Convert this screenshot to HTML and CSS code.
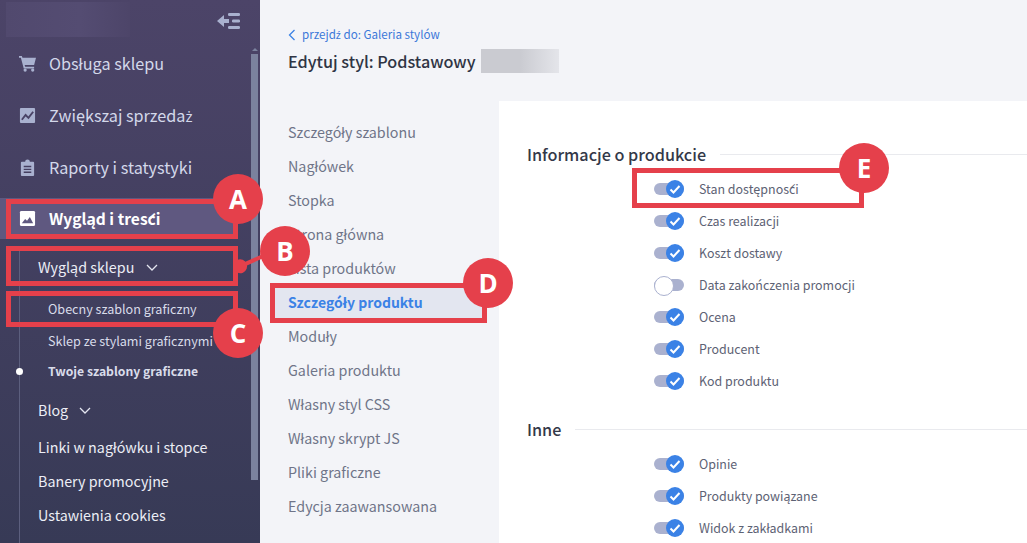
FILE: index.html
```
<!DOCTYPE html>
<html lang="pl">
<head>
<meta charset="utf-8">
<title>Edytuj styl</title>
<link rel="stylesheet" href="styles.css">
</head>
<body>
<div class="app">
  <aside class="sidebar">
    <div class="side-head">
      <div class="logo-blur"></div>
      <svg class="collapse" width="23" height="16" viewBox="0 0 23 16"><path d="M0 8l7-6v4h5v4H7v4z" fill="#a9b1cf"/><rect x="11" y="0" width="12" height="3" rx="1.200" fill="#a9b1cf"/><rect x="15" y="6.500" width="8" height="3" rx="1.200" fill="#a9b1cf"/><rect x="11" y="13" width="12" height="3" rx="1.200" fill="#a9b1cf"/></svg>
    </div>
    <div class="side-scroll">
      <nav class="menu">
        <a class="top-item"><svg class="ico" viewBox="0 0 18 18"><path d="M0 1h3l.7 2H18l-2 7.500H6l.5 2H16v1.800H5L2 2.800H0z" fill="#a9b1cf"/><circle cx="6.500" cy="16" r="1.700" fill="#a9b1cf"/><circle cx="14.500" cy="16" r="1.700" fill="#a9b1cf"/></svg>Obsługa sklepu</a>
        <a class="top-item"><svg class="ico" viewBox="0 0 18 18"><rect x="1" y="1" width="16" height="16" rx="1" fill="#a9b1cf"/><path d="M3 13.500l4-5 3 3 5-6.500" fill="none" stroke="#4a4366" stroke-width="2"/></svg><span>Zwiększaj sprzeda<span class="dia">ż</span></span></a>
        <a class="top-item"><svg class="ico" viewBox="0 0 18 18"><path d="M3 3h3.500a2.500 2.500 0 0 1 5 0H15a1 1 0 0 1 1 1v13a1 1 0 0 1-1 1H3a1 1 0 0 1-1-1V4a1 1 0 0 1 1-1z" fill="#a9b1cf"/><path d="M5 8h8M5 11h8M5 14h8" stroke="#453f60" stroke-width="1.500"/></svg>Raporty i statystyki</a>
        <a class="top-item active"><svg class="ico" viewBox="0 0 18 18"><rect x="1" y="1" width="16" height="16" rx="1.500" fill="#fff"/><path d="M3 14l3.500-4.500 2 2L11.500 7.500 15 14z" fill="#5f5880"/></svg>Wygląd i treści</a>
      </nav>
      <div class="submenu">
        <a class="sub-item first">Wygląd sklepu <svg class="chev" width="12" height="7" viewBox="0 0 12 7"><path d="M1 1l5 5 5-5" fill="none" stroke="#e4e6f0" stroke-width="1.300"/></svg></a>
        <div class="sub-sub">
          <a>Obecny szablon graficzny</a>
          <a>Sklep ze stylami graficznymi</a>
          <a class="current">Twoje szablony graficzne</a>
        </div>
        <a class="sub-item blog">Blog <svg class="chev" width="12" height="7" viewBox="0 0 12 7"><path d="M1 1l5 5 5-5" fill="none" stroke="#e4e6f0" stroke-width="1.300"/></svg></a>
        <a class="sub-item">Linki w nagłówku i stopce</a>
        <a class="sub-item">Banery promocyjne</a>
        <a class="sub-item">Ustawienia cookies</a>
      </div>
      <div class="scrollbar"><div class="arrow"></div><div class="thumb"></div></div>
    </div>
  </aside>
  <main class="main">
    <header class="page-head">
      <a class="back"><svg width="8" height="12" viewBox="0 0 8 12"><path d="M6.500 1l-5 5 5 5" fill="none" stroke="#3b82e6" stroke-width="1.300"/></svg><span>przejd<span class="dia">ź</span> do: Galeria stylów</span></a>
      <h1>Edytuj styl: Podstawowy <span class="name-blur"></span></h1>
    </header>
    <div class="columns">
      <nav class="style-nav">
        <a>Szczegóły szablonu</a>
        <a>Nagłówek</a>
        <a>Stopka</a>
        <a>Strona główna</a>
        <a>Lista produktów</a>
        <a class="selected">Szczegóły produktu</a>
        <a>Moduły</a>
        <a>Galeria produktu</a>
        <a>Własny styl CSS</a>
        <a>Własny skrypt JS</a>
        <a>Pliki graficzne</a>
        <a>Edycja zaawansowana</a>
      </nav>
      <section class="panel">
        <h2><span>Informacje o produkcie</span></h2>
        <div class="rows">
          <label class="row"><span class="toggle on"><svg viewBox="0 0 16 16" width="16" height="16"><path d="M3.500 8.500l3 3 6-6.500" fill="none" stroke="#fff" stroke-width="2"/></svg></span>Stan dostępności</label>
          <label class="row"><span class="toggle on"><svg viewBox="0 0 16 16" width="16" height="16"><path d="M3.500 8.500l3 3 6-6.500" fill="none" stroke="#fff" stroke-width="2"/></svg></span>Czas realizacji</label>
          <label class="row"><span class="toggle on"><svg viewBox="0 0 16 16" width="16" height="16"><path d="M3.500 8.500l3 3 6-6.500" fill="none" stroke="#fff" stroke-width="2"/></svg></span>Koszt dostawy</label>
          <label class="row"><span class="toggle off"></span>Data zakończenia promocji</label>
          <label class="row"><span class="toggle on"><svg viewBox="0 0 16 16" width="16" height="16"><path d="M3.500 8.500l3 3 6-6.500" fill="none" stroke="#fff" stroke-width="2"/></svg></span>Ocena</label>
          <label class="row"><span class="toggle on"><svg viewBox="0 0 16 16" width="16" height="16"><path d="M3.500 8.500l3 3 6-6.500" fill="none" stroke="#fff" stroke-width="2"/></svg></span>Producent</label>
          <label class="row"><span class="toggle on"><svg viewBox="0 0 16 16" width="16" height="16"><path d="M3.500 8.500l3 3 6-6.500" fill="none" stroke="#fff" stroke-width="2"/></svg></span>Kod produktu</label>
        </div>
        <h2 class="second"><span>Inne</span></h2>
        <div class="rows">
          <label class="row"><span class="toggle on"><svg viewBox="0 0 16 16" width="16" height="16"><path d="M3.500 8.500l3 3 6-6.500" fill="none" stroke="#fff" stroke-width="2"/></svg></span>Opinie</label>
          <label class="row"><span class="toggle on"><svg viewBox="0 0 16 16" width="16" height="16"><path d="M3.500 8.500l3 3 6-6.500" fill="none" stroke="#fff" stroke-width="2"/></svg></span>Produkty powiązane</label>
          <label class="row"><span class="toggle on"><svg viewBox="0 0 16 16" width="16" height="16"><path d="M3.500 8.500l3 3 6-6.500" fill="none" stroke="#fff" stroke-width="2"/></svg></span>Widok z zakładkami</label>
        </div>
      </section>
    </div>
  </main>
</div>
<div class="box box-a"></div>
<div class="box box-b"></div>
<div class="box box-c"></div>
<div class="box box-d"></div>
<div class="box box-e"></div>
<div class="connector"></div>
<div class="badge badge-a">A</div>
<div class="badge badge-b">B</div>
<div class="badge badge-c">C</div>
<div class="badge badge-d">D</div>
<div class="badge badge-e">E</div>
</body>
</html>
```
FILE: styles.css
```
* { box-sizing: border-box; }
html, body { margin: 0; padding: 0; height: 543px; overflow: hidden; }
body { font-family: "Noto Sans CJK JP", "Noto Sans", sans-serif; background: #f3f4f8; color: #2f3444; position: relative; }
a { display: block; text-decoration: none; }
.dia { font-family: "Noto Sans", sans-serif; font-size: 0.93em; }
.app { display: flex; height: 543px; }

.sidebar { width: 260px; flex: none; height: 543px; background: linear-gradient(180deg, #4c4468 0%, #373a56 100%); display: flex; flex-direction: column; }
.side-head { height: 37px; flex: none; position: relative; display: flex; align-items: flex-start; justify-content: flex-end; padding: 13px 20px 0 6px; }
.logo-blur { position: absolute; left: 6px; top: 2px; width: 124px; height: 35px; background: linear-gradient(90deg, #51496e, #544c72 60%, #4d4569); }
.side-scroll { flex: 1; position: relative; min-height: 0; }
.scrollbar { position: absolute; right: 0; top: 0; bottom: 0; width: 10px; }
.arrow { position: absolute; left: 2px; top: 11px; border: 3px solid transparent; border-top: 0; border-bottom: 3px solid #7b829e; }
.thumb { position: absolute; left: 1px; right: 2px; top: 17px; height: 426px; background: #7b829e; }
.menu { display: flex; flex-direction: column; }
.top-item { height: 52px; display: flex; align-items: center; padding-left: 19px; color: #d3d8ea; font-size: 16.200px; gap: 13px; }
.ico { width: 17px; height: 17px; flex: none; }
.top-item.active { height: 41px; margin-top: 5px; color: #fff; font-weight: 700; font-size: 15.600px; background: #5f5880; margin-right: 22px; }
.submenu { margin-left: 19px; margin-top: 9px; border-left: 1px solid #5c5f7e; padding-left: 18px; height: 300px; }
.sub-item { color: #eceef6; font-size: 14.300px; height: 34px; line-height: 34px; }
.sub-item.first { height: 38px; line-height: 38px; }
.chev { margin-left: 8px; vertical-align: 2px; }
.sub-sub { padding: 7px 0 2.500px 10px; }
.sub-sub a { color: #d9dcea; font-size: 12.600px; height: 31.500px; line-height: 31.500px; }
.sub-sub a.current { font-weight: 700; font-size: 12.200px; position: relative; }
.sub-sub a.current::before { content: ""; position: absolute; left: -32.500px; top: 12px; width: 7px; height: 7px; border-radius: 50%; background: #fff; }
.sub-item.blog { height: 40px; line-height: 40px; }

.main { flex: 1; min-width: 0; display: flex; flex-direction: column; }
.page-head { height: 101px; padding: 25px 0 0 28px; flex: none; }
.back { color: #3b78d8; font-size: 11.600px; line-height: 18px; display: flex; align-items: center; gap: 6px; }
h1 { margin: 4px 0 0; font-size: 16.200px; font-weight: 500; line-height: 26px; color: #2f3444; display: flex; align-items: center; gap: 5px; }
.name-blur { display: inline-block; width: 78px; height: 24px; background: linear-gradient(90deg, #cacbd1 0%, #cacbd1 50%, #e4e5ea 100%); }
.columns { flex: 1; display: flex; min-height: 0; }
.style-nav { width: 239px; flex: none; padding: 14px 0 0 14px; }
.style-nav a { height: 34px; line-height: 34px; padding-left: 14px; margin-right: 16px; color: #6f7488; font-size: 14.300px; }
.style-nav a.selected { color: #3b82e6; font-weight: 700; font-size: 14px; background: #e3e6f0; }
.panel { flex: 1; background: #fff; padding: 42px 0 0 28px; min-width: 0; }
h2 { margin: 0; font-size: 16.200px; font-weight: 500; line-height: 22px; color: #333848; display: flex; align-items: center; gap: 14px; }
h2::after { content: ""; flex: 1; height: 1px; background: #e9eaee; }
h2.second { margin-top: 21px; }
.rows { padding: 8px 0 0 127px; display: flex; flex-direction: column; }
.row { height: 32px; display: flex; align-items: center; gap: 15px; color: #5d6274; font-size: 12.450px; }
.toggle { width: 30px; height: 12px; border-radius: 6px; background: #aab1cf; position: relative; flex: none; }
.toggle.on svg { position: absolute; right: 0; top: -3px; width: 18px; height: 18px; border-radius: 50%; background: #3b82e6; padding: 1px; }
.toggle.off::before { content: ""; position: absolute; left: 0; top: -3px; width: 18px; height: 18px; border-radius: 50%; background: #fff; border: 1px solid #aab1cf; }

.box { position: absolute; border: 5px solid #e5404b; }
.box-a { left: 6px; top: 199px; width: 232px; height: 40px; }
.box-b { left: 6px; top: 246px; width: 232px; height: 40px; }
.box-c { left: 6px; top: 291px; width: 232px; height: 36px; }
.box-d { left: 270px; top: 283px; width: 217px; height: 40px; }
.box-e { left: 632px; top: 168px; width: 232px; height: 40px; }
.connector { position: absolute; left: 236.500px; top: 259px; width: 30px; height: 4px; background: #e5404b; transform: rotate(-24deg); }
.connector::before { content: ""; position: absolute; left: -5.500px; top: -5px; width: 14px; height: 14px; border-radius: 50%; background: #e5404b; }
.badge { position: absolute; width: 50px; height: 50px; border-radius: 50%; background: #e5404b; color: #fff; font-family: "Open Sans", sans-serif; font-weight: 700; font-size: 26px; line-height: 50px; text-align: center; }
.badge-a { left: 213px; top: 174px; }
.badge-b { left: 260px; top: 226px; }
.badge-c { left: 213px; top: 308px; }
.badge-d { left: 463px; top: 258px; }
.badge-e { left: 839px; top: 143px; }
```
